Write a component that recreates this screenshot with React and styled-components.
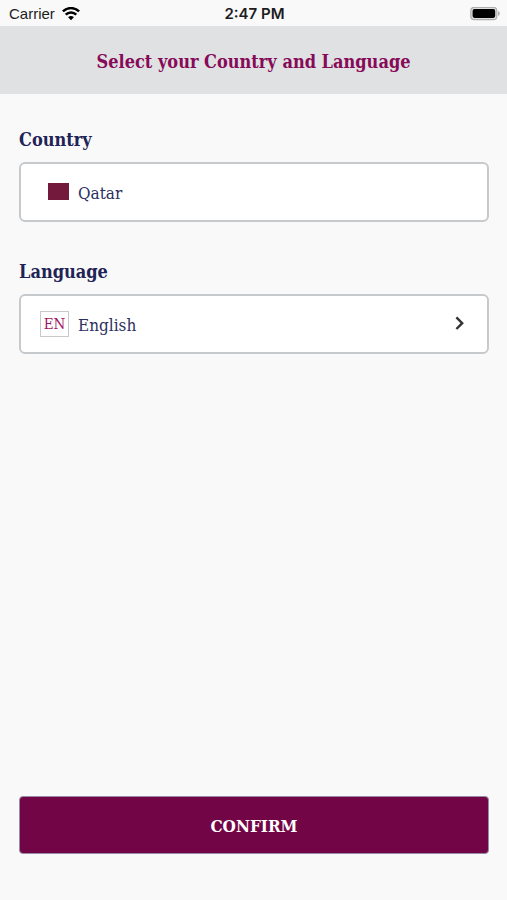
import React from "react";
import styled, { createGlobalStyle } from "styled-components";

const slab = '"DejaVu Serif Condensed", "DejaVu Serif", serif';

const GlobalStyle = createGlobalStyle`
  * { box-sizing: border-box; }
  body { margin: 0; background: #f9f9f9; }
`;

const Screen = styled.div`
  display: flex;
  flex-direction: column;
  min-height: 100vh;
  background: #f9f9f9;
  font-family: ${slab};
`;

const StatusBar = styled.div`
  display: grid;
  grid-template-columns: 1fr auto 1fr;
  align-items: center;
  height: 26px;
  padding: 1px 7px 0 9px;
  font: 400 15px/24px Inter, sans-serif;
  color: #1c1c1e;
`;

const Carrier = styled.div`
  display: flex;
  align-items: center;
  gap: 7px;
  font: 400 15px/24px "Liberation Sans", sans-serif;
`;

const Clock = styled.time`
  font-size: 15px;
  font-weight: 600;
`;

const Battery = styled.svg`
  justify-self: end;
`;

const Header = styled.header`
  display: flex;
  align-items: center;
  justify-content: center;
  min-height: 68px;
  padding: 4px 20px 0;
  background: #dfe1e3;
`;

const Title = styled.h1`
  margin: 0;
  font-size: 18px;
  line-height: 24px;
  font-weight: 700;
  color: #870a58;
`;

const Form = styled.form`
  display: flex;
  flex: 1;
  flex-direction: column;
  gap: 38px;
  padding: 34px 18px 46px 19px;
`;

const Field = styled.div`
  display: flex;
  flex-direction: column;
  gap: 10px;
`;

const Label = styled.label`
  align-self: flex-start;
  font-size: 18px;
  line-height: 24px;
  font-weight: 700;
  color: #1f2456;
`;

const Picker = styled.button`
  display: flex;
  align-items: center;
  gap: 9px;
  width: 100%;
  min-height: 60px;
  padding: 0 20px 0 19px;
  border: 2px solid #c7cacc;
  border-radius: 6px;
  background: #ffffff;
  font: 400 17px/24px ${slab};
  color: #2b2f5e;
  text-align: left;
`;

const Value = styled.span`
  flex: 1;
  padding-top: 2px;
`;

const Badge = styled.span`
  display: flex;
  align-items: center;
  justify-content: flex-end;
  width: 29px;
  height: 26px;
`;

const Flag = styled.span`
  width: 21px;
  height: 17px;
  margin-bottom: 2px;
  background: #731a3c;
`;

const LanguageCode = styled(Badge)`
  justify-content: center;
  border: 1px solid #c7c9cc;
  font-size: 15px;
  color: #a3125f;
`;

const Confirm = styled.button`
  width: 100%;
  min-height: 58px;
  margin-top: auto;
  padding: 2px 20px 0;
  border: 1px solid #978ba5;
  border-radius: 4px;
  background: #720546;
  font: 700 17px/24px ${slab};
  color: #ffffff;
`;

function WifiIcon() {
  return (
    <svg width="18" height="14" viewBox="0 0 18 14" fill="none" stroke="#000" strokeWidth="2.5" aria-hidden="true">
      <path d="M.9 4.4C5.5 0 12.5 0 17.1 4.4M3.7 7.6c3-2.9 7.6-2.9 10.6 0" />
      <path d="M9 13.2 6.1 10.3c1.7-1.6 4.1-1.6 5.8 0z" fill="#000" stroke="none" />
    </svg>
  );
}

function BatteryIcon() {
  return (
    <Battery width="30" height="14" viewBox="0 0 30 14" role="img" aria-label="Battery full">
      <rect x="0.8" y="0.3" width="26" height="12.4" rx="3.5" fill="#dedede" stroke="#aeaeae" strokeWidth="1.2" />
      <rect x="2.6" y="2.1" width="22.6" height="8.8" rx="1.8" fill="#000" />
      <path d="M28 4c2.4.8 2.4 4.2 0 5z" fill="#aeaeae" />
    </Battery>
  );
}

function Chevron() {
  return (
    <svg width="14" height="16" viewBox="0 0 14 16" fill="none" stroke="#333" strokeWidth="2.4" aria-hidden="true">
      <path d="m3.4 1.4 5.8 5.8-5.8 5.8" />
    </svg>
  );
}

export default function App() {
  return (
    <Screen>
      <GlobalStyle />
      <StatusBar>
        <Carrier>Carrier <WifiIcon /></Carrier>
        <Clock>2:47 PM</Clock>
        <BatteryIcon />
      </StatusBar>
      <Header>
        <Title>Select your Country and Language</Title>
      </Header>
      <Form onSubmit={(event) => event.preventDefault()}>
        <Field>
          <Label htmlFor="country">Country</Label>
          <Picker type="button" id="country">
            <Badge><Flag /></Badge>
            <Value>Qatar</Value>
          </Picker>
        </Field>
        <Field>
          <Label htmlFor="language">Language</Label>
          <Picker type="button" id="language">
            <LanguageCode>EN</LanguageCode>
            <Value>English</Value>
            <Chevron />
          </Picker>
        </Field>
        <Confirm type="submit">CONFIRM</Confirm>
      </Form>
    </Screen>
  );
}
